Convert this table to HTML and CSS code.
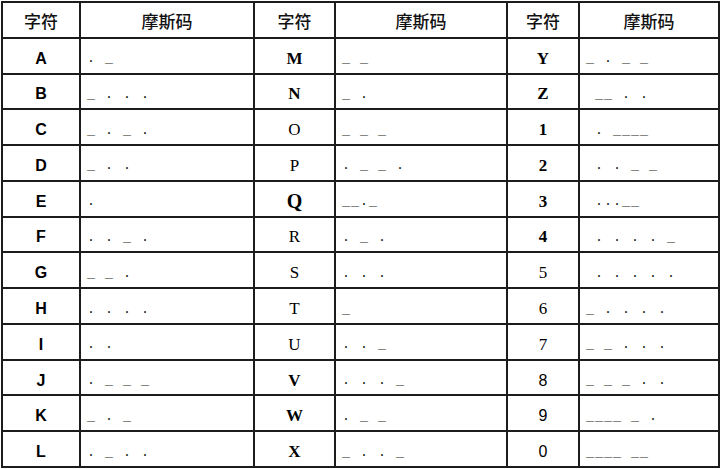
FILE: index.html
```html
<!DOCTYPE html>
<html lang="zh">
<head>
<meta charset="utf-8">
<title>摩斯码</title>
<link rel="stylesheet" href="styles.css">
</head>
<body>
<div class="table">
  <div class="cell head">字符</div><div class="cell head">摩斯码</div><div class="cell head">字符</div><div class="cell head">摩斯码</div><div class="cell head">字符</div><div class="cell head">摩斯码</div>

  <div class="cell key ks">A</div><div class="cell code">. _</div><div class="cell key kb">M</div><div class="cell code">_ _</div><div class="cell key kb">Y</div><div class="cell code">_ . _ _</div>
  <div class="cell key ks">B</div><div class="cell code">_ . . .</div><div class="cell key kb">N</div><div class="cell code">_ .</div><div class="cell key kb">Z</div><div class="cell code"> __ . .</div>
  <div class="cell key ks">C</div><div class="cell code">_ . _ .</div><div class="cell key kr">O</div><div class="cell code">_ _ _</div><div class="cell key kb">1</div><div class="cell code"> . ____</div>
  <div class="cell key ks">D</div><div class="cell code">_ . .</div><div class="cell key kr">P</div><div class="cell code">. _ _ .</div><div class="cell key kb">2</div><div class="cell code"> . . _ _</div>
  <div class="cell key ks">E</div><div class="cell code">.</div><div class="cell key kq">Q</div><div class="cell code">__._</div><div class="cell key kb">3</div><div class="cell code"> ...__</div>
  <div class="cell key ks">F</div><div class="cell code">. . _ .</div><div class="cell key kr">R</div><div class="cell code">. _ .</div><div class="cell key kb">4</div><div class="cell code"> . . . . _</div>
  <div class="cell key ks">G</div><div class="cell code">_ _ .</div><div class="cell key kr">S</div><div class="cell code">. . .</div><div class="cell key kr">5</div><div class="cell code"> . . . . .</div>
  <div class="cell key ks">H</div><div class="cell code">. . . .</div><div class="cell key kr">T</div><div class="cell code">_</div><div class="cell key kr">6</div><div class="cell code">_ . . . .</div>
  <div class="cell key ks">I</div><div class="cell code">. .</div><div class="cell key kr">U</div><div class="cell code">. . _</div><div class="cell key kr">7</div><div class="cell code">_ _ . . .</div>
  <div class="cell key ks">J</div><div class="cell code">. _ _ _</div><div class="cell key kb">V</div><div class="cell code">. . . _</div><div class="cell key kd">8</div><div class="cell code">_ _ _ . .</div>
  <div class="cell key ks">K</div><div class="cell code">_ . _</div><div class="cell key kb">W</div><div class="cell code">. _ _</div><div class="cell key kd">9</div><div class="cell code">____ _ .</div>
  <div class="cell key ks">L</div><div class="cell code">. _ . .</div><div class="cell key kb">X</div><div class="cell code">_ . . _</div><div class="cell key kd">0</div><div class="cell code">____ __</div>
</div>
</body>
</html>
```
FILE: styles.css
```css
body {
  margin: 0;
  background: #fff;
}

.table {
  display: grid;
  grid-template-columns: 76px 172px 79px 170px 70px 138px;
  grid-template-rows: repeat(13, 1fr);
  gap: 2px;
  padding: 2px;
  background: #1c1c1c;
  width: max-content;
  height: 467px;
  box-sizing: border-box;
  margin: 1px 0 0 1px;
}

.cell {
  background: #fff;
  display: flex;
  align-items: center;
  padding-top: 6px;
  box-sizing: border-box;
  min-width: 0;
  overflow: hidden;
}

.head {
  justify-content: center;
  font-family: "Noto Sans CJK SC", sans-serif;
  font-size: 17px;
  font-weight: 500;
  padding-top: 2px;
  color: #111;
}

.key {
  justify-content: center;
  color: #000;
}

.ks {
  font-family: "Liberation Sans Narrow", "Liberation Sans", Arial, sans-serif;
  font-weight: bold;
  font-size: 16px;
}

.kb {
  font-family: "Liberation Serif", serif;
  font-weight: bold;
  font-size: 17px;
}

.kr {
  font-family: "Liberation Serif", serif;
  font-size: 17px;
}

.kq {
  font-family: "Liberation Serif", serif;
  font-weight: bold;
  font-size: 20px;
}

.kd {
  font-family: "Liberation Sans", Arial, sans-serif;
  font-size: 16px;
}

.code {
  font-family: "Liberation Mono", monospace;
  font-size: 13.33px;
  letter-spacing: 1px;
  white-space: pre;
  padding-left: 6px;
  color: #1a1a1a;
}
```
